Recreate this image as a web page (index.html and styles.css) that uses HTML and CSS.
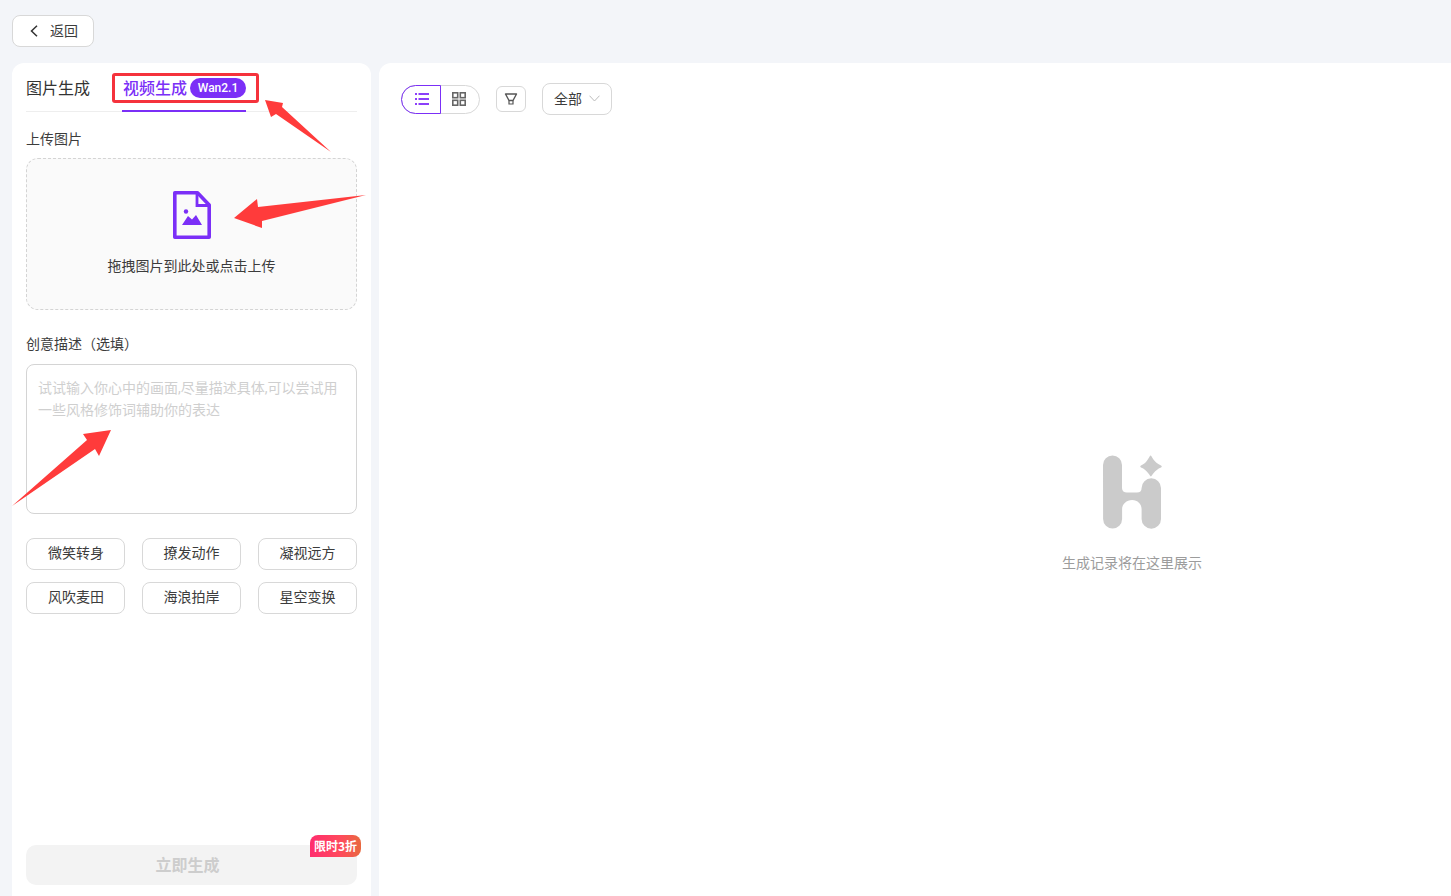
FILE: index.html
```html
<!DOCTYPE html>
<html lang="zh">
<head>
<meta charset="utf-8">
<title>视频生成</title>
<link rel="stylesheet" href="styles.css">
</head>
<body>
<div class="topbar">
  <button class="back">
    <svg width="12" height="12" viewBox="0 0 12 12" fill="none"><path d="M8 .7 2.500 6 8 11.300" stroke="#333" stroke-width="1.500"/></svg>
    <span>返回</span>
  </button>
</div>
<div class="main">
  <aside class="panel">
    <div class="tabs">
      <span class="tab">图片生成</span>
      <span class="tab active">视频生成<em class="badge">Wan2.1</em></span>
    </div>
    <div class="label first">上传图片</div>
    <div class="upload">
      <svg class="upload-icon" width="38" height="48" viewBox="0 0 38 48">
        <path d="M1.800 1.800H24.500L36.200 14V46.200H1.800Z" fill="none" stroke="#7b2ff7" stroke-width="3.600" stroke-linejoin="round"/>
        <path d="M24 2V14.500H36" fill="none" stroke="#7b2ff7" stroke-width="2.800"/>
        <circle cx="13" cy="20.500" r="2.200" fill="#7b2ff7"/>
        <path d="M9 34 15 25 19 28.500 23 24 29 34Z" fill="#7b2ff7"/>
      </svg>
      <div class="upload-text">拖拽图片到此处或点击上传</div>
    </div>
    <div class="label second">创意描述（选填）</div>
    <div class="prompt">试试输入你心中的画面,尽量描述具体,可以尝试用一些风格修饰词辅助你的表达</div>
    <div class="chips">
      <span class="chip">微笑转身</span>
      <span class="chip">撩发动作</span>
      <span class="chip">凝视远方</span>
      <span class="chip">风吹麦田</span>
      <span class="chip">海浪拍岸</span>
      <span class="chip">星空变换</span>
    </div>
    <div class="submit-wrap">
      <button class="submit">立即生成</button>
      <span class="discount">限时3折</span>
    </div>
  </aside>
  <section class="content">
    <div class="toolbar">
      <div class="view-toggle">
        <span class="view active">
          <svg width="16" height="14" viewBox="0 0 16 14" fill="#8b3ffa"><rect x="1" y="1" width="2" height="2"/><rect x="4.500" y="1" width="10.500" height="2"/><rect x="1" y="6" width="2" height="2"/><rect x="4.500" y="6" width="10.500" height="2"/><rect x="1" y="11" width="2" height="2"/><rect x="4.500" y="11" width="10.500" height="2"/></svg>
        </span>
        <span class="view grid-view">
          <svg width="14" height="14" viewBox="0 0 14 14" fill="none" stroke="#666" stroke-width="1.600"><rect x="0.800" y="0.800" width="4.900" height="4.900"/><rect x="8.300" y="0.800" width="4.900" height="4.900"/><rect x="0.800" y="8.300" width="4.900" height="4.900"/><rect x="8.300" y="8.300" width="4.900" height="4.900"/></svg>
        </span>
      </div>
      <span class="filter">
        <svg width="14" height="14" viewBox="0 0 14 14" fill="none" stroke="#555" stroke-width="1.400"><path d="M1.500 2H12.500L9 8.500H5Z" stroke-linejoin="round"/><path d="M5 8.500V12H9V8.500" stroke-width="1.200"/></svg>
      </span>
      <span class="select">全部
        <svg width="11" height="7" viewBox="0 0 11 7" fill="none"><path d="M.5.700 5.500 6l5-5.300" stroke="#bbb" stroke-width="1"/></svg>
      </span>
    </div>
    <div class="empty">
      <svg width="62" height="76" viewBox="0 0 62 76" fill="#cbcbcb">
        <path d="M1 11a9.500 9.500 0 0 1 19 0V34c0 3 2 4.500 5 4.500h10c3 0 4.600-1.500 4.600-4.500a9.700 9.700 0 0 1 19.400 0V65a9.700 9.700 0 0 1-19.400 0V55c0-5-4-9-9.500-9s-10 4-10 9V65a9.500 9.500 0 0 1-19 0Z"/>
        <path d="M48.500 1.500C49.900 1.500 51 8 59 11.500 60 12 60 13 59 13.500 52.500 16 50 22 49 22.500 48 22.500 45.500 16 39 13.500 38 13 38 12 39 11.500 45.500 9 47.500 1.500 48.500 1.500Z"/>
      </svg>
      <p>生成记录将在这里展示</p>
    </div>
  </section>
</div>
<div class="marker"></div>
<svg class="arrows" width="1451" height="896" viewBox="0 0 1451 896">
  <path fill="#ff3b3b" d="M265 100 283 103 282 107 331 152 276 114 271 117Z"/>
  <path fill="#ff3b3b" d="M234 218 257 199 258 207 366 195 262 221 262 228Z"/>
  <path fill="#ff3b3b" d="M111 430 83 434 87 440 12 506 95 449 99 456Z"/>
</svg>
</body>
</html>
```
FILE: styles.css
```css
* { box-sizing: border-box; }
html, body { margin: 0; height: 896px; overflow: hidden; }
body {
  background: #f3f5f9;
  font-family: "Noto Sans CJK SC", "Noto Sans", sans-serif;
  color: #333;
  font-size: 14px;
  position: relative;
}
.topbar { height: 63px; padding: 15px 12px 0; }
.back {
  width: 82px; height: 32px;
  display: flex; align-items: center; gap: 9px;
  padding: 0 0 2px 16px;
  background: #fff; border: 1px solid #d8d8d8; border-radius: 8px;
  font: inherit; color: #3c3c3c;
}
.back svg { margin-top: 2px; }
.main { display: flex; gap: 8px; padding-left: 12px; height: 833px; }
.panel {
  width: 359px; flex: none;
  background: #fff; border-radius: 12px 12px 0 0;
  padding: 0 14px;
  display: flex; flex-direction: column;
}
.tabs {
  display: flex; height: 49px; padding-top: 12px;
  border-bottom: 1px solid #eee;
  font-size: 16px;
}
.tab { line-height: 24px; color: #333; height: 37px; white-space: nowrap; }
.tab.active {
  margin-left: 32px; width: 124px;
  color: #7b2ff7; display: flex; align-items: flex-start;
  border-bottom: 2px solid #7b2ff7; padding-left: 1px; font-weight: 500;
}
.badge {
  font-style: normal; font-size: 12px; font-weight: 500; color: #fff;
  background: #7b2ff7; border-radius: 10px;
  height: 20px; line-height: 21px; width: 56px; text-align: center;
  margin: 3px 0 0 3px; font-family: Roboto, sans-serif;
}
.label { line-height: 20px; color: #3c3c3c; }
.label.first { margin-top: 16px; }
.upload {
  margin-top: 10px; height: 152px;
  background: #fafafa; border: 1px dashed #d4d4d4; border-radius: 12px;
  display: flex; flex-direction: column; align-items: center;
  padding-top: 32px;
}
.upload-icon { display: block; }
.upload-text { margin-top: 16px; line-height: 20px; color: #3c3c3c; }
.label.second { margin-top: 23px; }
.prompt {
  margin-top: 11px; height: 150px;
  border: 1px solid #d4d4d4; border-radius: 8px;
  padding: 12px 11px 0;
  font-family: Roboto, "Noto Sans CJK SC", sans-serif;
  color: #cfcfcf; line-height: 22px;
}
.chips {
  display: grid; grid-template-columns: repeat(3, 99px);
  justify-content: space-between; row-gap: 12px;
  margin-top: 24px;
}
.chip {
  height: 32px; line-height: 27px; text-align: center;
  border: 1px solid #d8d8d8; border-radius: 8px; color: #3c3c3c;
}
.chip:nth-child(3n+1) { padding-left: 1px; }
.submit-wrap { position: relative; margin-top: auto; margin-bottom: 11px; }
.submit {
  display: block; width: 100%; height: 40px;
  background: #f3f3f3; border: 0; border-radius: 10px;
  font: inherit; font-size: 16px; font-weight: 700; color: #cdcdcd;
  padding: 0 8px 2px 0;
}
.discount {
  position: absolute; right: -4px; top: -10px;
  width: 51px; height: 22px; line-height: 22px; text-align: center;
  background: linear-gradient(90deg, #ff2d6e, #ff4a5c 60%, #e8693f);
  border-radius: 8px 8px 8px 0;
  color: #fff; font-size: 12px; font-weight: 700;
}
.content { flex: 1; background: #fff; border-radius: 12px 0 0 0; padding: 20px 22px; position: relative; }
.toolbar { display: flex; align-items: center; gap: 16px; height: 32px; }
.view-toggle { display: flex; width: 79px; height: 29px; border: 1px solid #d8d8d8; border-radius: 15px; }
.view { flex: 1; display: flex; align-items: center; justify-content: center; margin: -1px 0; }
.view.active { flex: none; width: 40px; margin-left: -1px; border: 1px solid #7b2ff7; border-radius: 15px 0 0 15px; padding-left: 2px; }
.view.grid-view { padding-right: 2px; }
.filter {
  width: 30px; height: 26px; display: flex; align-items: center; justify-content: center;
  border: 1px solid #d8d8d8; border-radius: 6px;
}
.select {
  width: 70px; height: 32px; display: flex; align-items: center; gap: 7px;
  padding: 0 0 2px 11px; border: 1px solid #d8d8d8; border-radius: 8px; color: #3c3c3c;
}
.empty {
  position: absolute; left: 653px; top: 391px; width: 200px;
  display: flex; flex-direction: column; align-items: center;
}
.empty svg { margin-left: 2px; }
.empty p { margin: 22px 0 0; line-height: 20px; color: #9c9c9c; }
.marker {
  position: absolute; left: 112px; top: 73px; width: 147px; height: 30px;
  border: 3px solid #f5323c; border-radius: 3px;
}
.arrows { position: absolute; left: 0; top: 0; pointer-events: none; }
```
